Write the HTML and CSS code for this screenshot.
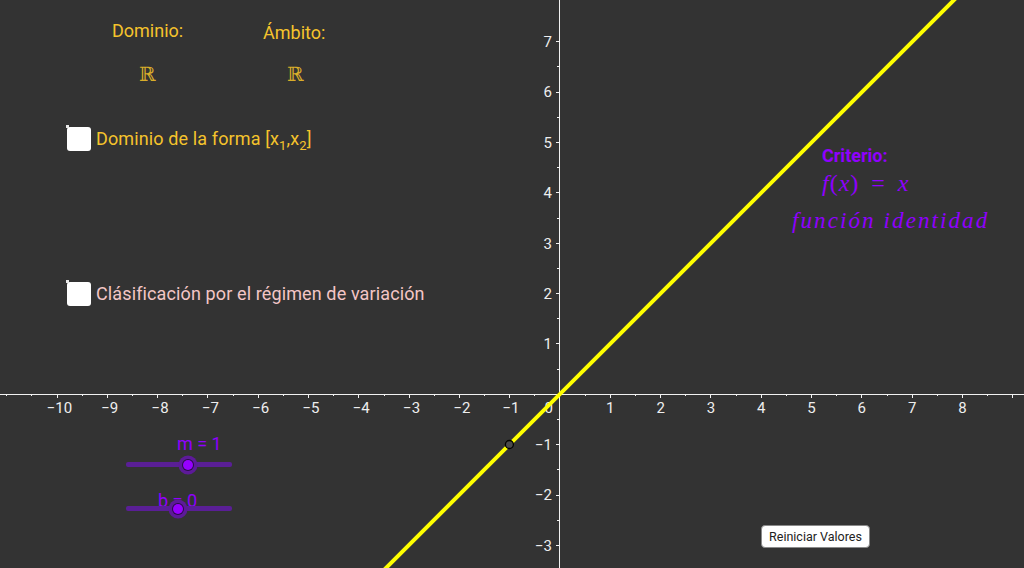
FILE: index.html
```html
<!DOCTYPE html>
<html lang="es">
<head>
<meta charset="utf-8">
<title>Función identidad</title>
<link rel="stylesheet" href="styles.css">
</head>
<body>
<div class="applet">
  <svg class="graph" width="1024" height="568" viewBox="0 0 1024 568">
    <g class="axis">
      <line x1="0" y1="394.5" x2="1024" y2="394.5"/>
      <line x1="559.5" y1="0" x2="559.5" y2="568"/>
      <path d="M57 394.5v3M107.3 394.5v3M157.6 394.5v3M207.9 394.5v3M258.2 394.5v3M308.5 394.5v3M358.8 394.5v3M409.1 394.5v3M459.4 394.5v3M509.7 394.5v3M610.3 394.5v3M660.6 394.5v3M710.9 394.5v3M761.2 394.5v3M811.5 394.5v3M861.8 394.5v3M912.1 394.5v3M962.4 394.5v3M1012.7 394.5v3"/>
      <path d="M6.7 394.5v1.6M31.9 394.5v1.6M82.2 394.5v1.6M132.5 394.5v1.6M182.8 394.5v1.6M233.1 394.5v1.6M283.4 394.5v1.6M333.7 394.5v1.6M384 394.5v1.6M434.3 394.5v1.6M484.6 394.5v1.6M534.9 394.5v1.6M585.2 394.5v1.6M635.5 394.5v1.6M685.8 394.5v1.6M736.1 394.5v1.6M786.4 394.5v1.6M836.7 394.5v1.6M887 394.5v1.6M937.3 394.5v1.6M987.6 394.5v1.6"/>
      <path d="M559 41.7h-3M559 92.1h-3M559 142.5h-3M559 192.8h-3M559 243.2h-3M559 293.6h-3M559 343.9h-3M559 444.7h-3M559 495h-3M559 545.4h-3"/>
      <path d="M559 66.9h-2M559 117.3h-2M559 167.7h-2M559 218h-2M559 268.4h-2M559 318.8h-2M559 369.1h-2M559 419.5h-2M559 469.9h-2M559 520.2h-2"/>
    </g>
    <g class="xlabels">
      <text x="59.5">−10</text><text x="109.8">−9</text><text x="160.1">−8</text><text x="210.4">−7</text><text x="260.7">−6</text>
      <text x="311">−5</text><text x="361.3">−4</text><text x="411.6">−3</text><text x="461.9">−2</text><text x="511">−1</text>
      <text x="610.3">1</text><text x="660.6">2</text><text x="710.9">3</text><text x="761.2">4</text>
      <text x="811.5">5</text><text x="861.8">6</text><text x="912.1">7</text><text x="962.4">8</text>
    </g>
    <text class="origin" x="553" y="413">0</text>
    <g class="ylabels">
      <text y="47">7</text><text y="97.4">6</text><text y="147.8">5</text><text y="198.1">4</text>
      <text y="248.5">3</text><text y="298.9">2</text><text y="349.2">1</text>
      <text y="450">−1</text><text y="500.3">−2</text><text y="550.7">−3</text>
    </g>
    <line class="fline" x1="359.7" y1="594.3" x2="979.7" y2="-25.7"/>
    <circle class="pt" cx="509.4" cy="444.5" r="4"/>
  </svg>

  <div class="txt yellow dominio">Dominio:</div>
  <div class="txt yellow ambito">Ámbito:</div>
  <div class="reals r1">ℝ</div>
  <div class="reals r2">ℝ</div>

  <label class="check c1">
    <span class="box"></span>
    <span class="txt-in yellow">Dominio de la forma [x<sub>1</sub>,x<sub>2</sub>]</span>
  </label>
  <label class="check c2">
    <span class="box"></span>
    <span class="txt-in pink">Clásificación por el régimen de variación</span>
  </label>

  <div class="txt purple criterio">Criterio:</div>
  <div class="math formula"><i>f</i>(<i>x</i>) = <i>x</i></div>
  <div class="math ident">función identidad</div>

  <div class="txt purple slabel m">m = 1</div>
  <div class="slider s1"><span class="knob k1"></span></div>
  <div class="txt purple slabel b">b = 0</div>
  <div class="slider s2"><span class="knob k2"></span></div>

  <button class="reset">Reiniciar Valores</button>
</div>
</body>
</html>
```

FILE: styles.css
```css
html, body {
  margin: 0;
  padding: 0;
  background: #333333;
}
.applet {
  position: relative;
  width: 1024px;
  height: 568px;
  overflow: hidden;
  background: #333333;
  font-family: Roboto, "Liberation Sans", sans-serif;
}
.graph {
  position: absolute;
  left: 0;
  top: 0;
  display: block;
}
.axis line, .axis path {
  stroke: #f2f2f2;
  stroke-width: 1;
  fill: none;
  shape-rendering: crispEdges;
}
.xlabels text, .ylabels text, .origin {
  font-family: Roboto, "Liberation Sans", sans-serif;
  font-size: 15px;
  fill: #eeeeee;
}
.xlabels text { text-anchor: middle; }
.xlabels { transform: translateY(413px); }
.ylabels text { text-anchor: end; }
.ylabels { transform: translateX(552px); }
.origin { text-anchor: end; }
.fline {
  stroke: #ffff00;
  stroke-width: 4;
}
.pt {
  fill: #4a4a4a;
  stroke: #000;
  stroke-width: 1.3;
}

.txt {
  position: absolute;
  font-size: 18px;
  line-height: 18px;
  white-space: nowrap;
}
.yellow { color: #f5c32c; }
.pink { color: #f3c6c6; }
.purple { color: #9000ff; }

.dominio { left: 112px; top: 22px; }
.ambito { left: 263px; top: 24px; }

.reals {
  position: absolute;
  font-family: "DejaVu Serif", serif;
  font-size: 20px;
  line-height: 20px;
  color: #d9ad2a;
  top: 64px;
}
.r1 { left: 139px; }
.r2 { left: 287px; }

.check {
  position: absolute;
  left: 67px;
  display: flex;
  align-items: center;
  gap: 5px;
  font-size: 18px;
  line-height: 18px;
  white-space: nowrap;
}
.c1 { top: 127px; }
.c2 { top: 282px; }
.box {
  position: relative;
  width: 24px;
  height: 24px;
  background: #ffffff;
  border-radius: 3px;
  display: block;
}
.box::before {
  content: "";
  position: absolute;
  left: -1px;
  top: -2px;
  width: 3px;
  height: 3px;
  background: #e8e8e8;
}
.txt-in { letter-spacing: 0.12px; }
.txt-in sub {
  font-size: 13px;
  vertical-align: -5px;
  line-height: 0;
}

.criterio { left: 822px; top: 147px; font-weight: bold; }
.math {
  position: absolute;
  font-family: "Liberation Serif", "DejaVu Serif", serif;
  color: #9000ff;
  white-space: nowrap;
}
.formula {
  left: 822px;
  top: 171px;
  font-size: 24px;
  line-height: 24px;
  word-spacing: 5px;
  letter-spacing: 1px;
}
.ident {
  left: 792px;
  top: 209px;
  font-size: 23px;
  line-height: 23px;
  font-style: italic;
  letter-spacing: 2.1px;
}

.slabel.m { left: 177px; top: 435px; }
.slabel.b { left: 158px; top: 492px; }
.slider {
  position: absolute;
  left: 126px;
  width: 106px;
  height: 5px;
  border-radius: 2px;
  background: #5a1f96;
}
.s1 { top: 462px; }
.s2 { top: 506px; }
.knob {
  position: absolute;
  top: 50%;
  width: 10px;
  height: 10px;
  margin-top: -5px;
  margin-left: -5px;
  border-radius: 50%;
  background: #9600ff;
  box-shadow: 0 0 0 1px #2a0b48, 0 0 0 4.5px #5d1a99;
}
.k1 { left: 62px; }
.k2 { left: 52px; }

.reset {
  position: absolute;
  left: 761px;
  top: 525px;
  width: 109px;
  height: 23px;
  padding: 0;
  background: #ffffff;
  border: 1px solid #8a8a8a;
  border-radius: 4px;
  font-family: Roboto, "Liberation Sans", sans-serif;
  font-size: 12.5px;
  color: #222;
}
```
